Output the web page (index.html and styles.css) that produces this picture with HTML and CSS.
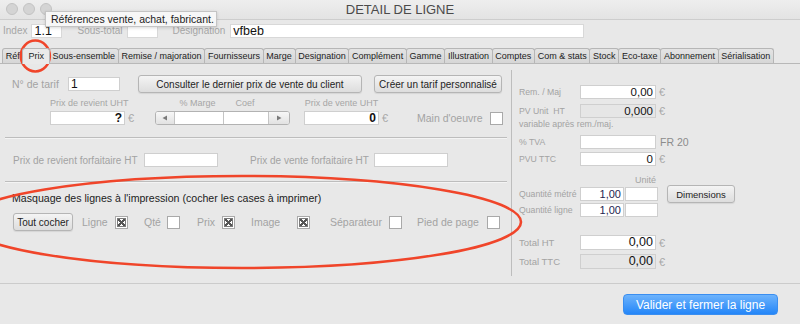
FILE: index.html
```html
<!DOCTYPE html>
<html lang="fr">
<head>
  <meta charset="UTF-8">
  <meta name="viewport" content="width=device-width, initial-scale=1.0">
  <title>DETAIL DE LIGNE</title>
  <link rel="stylesheet" href="styles.css">
</head>
<body>
  <div class="window">
    <div class="titlebar">
      <div class="lights"><span></span><span></span><span></span></div>
      <div class="title">DETAIL DE LIGNE</div>
      <div></div>
    </div>

    <div class="head-row">
      <span class="lbl-top">Index</span>
      <span class="field w-index">1.1</span>
      <span class="lbl-top gap">Sous-total</span>
      <span class="field w-sub"></span>
      <span class="lbl-top gap">Désignation</span>
      <span class="field w-desig">vfbeb</span>
    </div>

    <div class="tabs">
      <span class="tab">Réf</span>
      <span class="tab active">Prix</span>
      <span class="tab">Sous-ensemble</span>
      <span class="tab">Remise / majoration</span>
      <span class="tab">Fournisseurs</span>
      <span class="tab">Marge</span>
      <span class="tab">Designation</span>
      <span class="tab">Complément</span>
      <span class="tab">Gamme</span>
      <span class="tab">Illustration</span>
      <span class="tab">Comptes</span>
      <span class="tab">Com &amp; stats</span>
      <span class="tab">Stock</span>
      <span class="tab">Eco-taxe</span>
      <span class="tab">Abonnement</span>
      <span class="tab">Sérialisation</span>
    </div>

    <div class="content">
      <!-- partie gauche : tarif -->
      <div class="left">
        <div class="row tarif-row">
          <span class="lbl w-tarif-lbl">N° de tarif</span>
          <span class="field w-tarif">1</span>
          <button class="btn btn-consult">Consulter le dernier prix de vente du client</button>
          <button class="btn btn-create">Créer un tarif personnalisé</button>
        </div>

        <div class="row prices-row">
          <div class="group g-revient">
            <span class="cap w-price">Prix de revient UHT</span>
            <div class="ctl"><span class="field num w-price"><b>?</b></span><span class="euro">€</span></div>
          </div>
          <div class="group g-stepper">
            <div class="caps">
              <span class="cap w-arrow-l"></span>
              <span class="cap w-marge">% Marge</span>
              <span class="cap w-coef">Coef</span>
            </div>
            <div class="stepper">
              <span class="arrow w-arrow-l"><svg width="6" height="6" viewBox="0 0 6 6"><path d="M5 0.5L0.5 3L5 5.5Z" fill="#7a7a7a"/></svg></span>
              <span class="cell w-marge"></span>
              <span class="cell w-coef"></span>
              <span class="arrow w-arrow-r"><svg width="6" height="6" viewBox="0 0 6 6"><path d="M1 0.5L5.5 3L1 5.5Z" fill="#7a7a7a"/></svg></span>
            </div>
          </div>
          <div class="group g-vente">
            <span class="cap w-price">Prix de vente UHT</span>
            <div class="ctl"><span class="field num w-price"><b>0</b></span><span class="euro">€</span></div>
          </div>
          <div class="mo">
            <span class="lbl">Main d'oeuvre</span>
            <span class="check"></span>
          </div>
        </div>

        <div class="divider"></div>

        <div class="row forfait-row">
          <span class="lbl-sm w-forf1">Prix de revient forfaitaire HT</span>
          <span class="field w-forf"></span>
          <span class="lbl-sm w-forf2">Prix de vente forfaitaire HT</span>
          <span class="field w-forf"></span>
        </div>

        <div class="divider second"></div>

        <div class="mask-title">Masquage des lignes à l'impression (cocher les cases à imprimer)</div>

        <div class="row mask-row">
          <button class="btn btn-all">Tout cocher</button>
          <span class="opt o-ligne"><span class="lbl">Ligne</span><span class="check on"></span></span>
          <span class="opt o-qte"><span class="lbl">Qté</span><span class="check"></span></span>
          <span class="opt o-prix"><span class="lbl">Prix</span><span class="check on"></span></span>
          <span class="opt o-image"><span class="lbl">Image</span><span class="check on"></span></span>
          <span class="opt o-sep"><span class="lbl">Séparateur</span><span class="check"></span></span>
          <span class="opt o-pied"><span class="lbl">Pied de page</span><span class="check"></span></span>
        </div>
      </div>

      <!-- partie droite : totaux -->
      <div class="right">
        <div class="r-row r-first">
          <span class="r-lbl">Rem. / Maj</span>
          <span class="field num w-r">0,00</span><span class="euro">€</span>
        </div>
        <div class="r-row r-pv">
          <span class="r-lbl">PV Unit&nbsp; HT</span>
          <span class="field num w-r ro">0,000</span><span class="euro">€</span>
        </div>
        <div class="note">variable après rem./maj.</div>
        <div class="r-row r-tva">
          <span class="r-lbl">% TVA</span>
          <span class="field num w-r"></span><span class="tva-code">FR 20</span>
        </div>
        <div class="r-row r-ttc">
          <span class="r-lbl">PVU TTC</span>
          <span class="field num w-r">0</span><span class="euro">€</span>
        </div>
        <div class="unit-cap">Unité</div>
        <div class="r-row r-qm">
          <span class="r-lbl">Quantité métré</span>
          <span class="field num w-qty qty">1,00</span>
          <span class="field w-unit"></span>
          <button class="btn btn-dim">Dimensions</button>
        </div>
        <div class="r-row r-ql">
          <span class="r-lbl">Quantité ligne</span>
          <span class="field num w-qty qty">1,00</span>
          <span class="field w-unit"></span>
        </div>
        <div class="r-row r-tht">
          <span class="r-lbl total">Total HT</span>
          <span class="field num w-r big">0,00</span><span class="euro">€</span>
        </div>
        <div class="r-row r-tttc">
          <span class="r-lbl total">Total TTC</span>
          <span class="field num w-r big ro">0,00</span><span class="euro">€</span>
        </div>
      </div>
    </div>

    <div class="footer">
      <button class="btn-primary">Valider et fermer la ligne</button>
    </div>

    <div class="tooltip">Références vente, achat, fabricant.</div>

    <!-- annotations rouges -->
    <svg class="marks" width="800" height="326" viewBox="0 0 800 326">
      <ellipse cx="35.3" cy="56" rx="14.5" ry="15.5" fill="none" stroke="#f0452a" stroke-width="2.6"/>
      <ellipse cx="242" cy="222" rx="279" ry="46" fill="none" stroke="#f0452a" stroke-width="2.6"/>
    </svg>
  </div>
</body>
</html>
```

FILE: styles.css
```css
/* fenêtre détail de ligne */
* {
  box-sizing: border-box;
}
body {
  margin: 0;
  background-color: #ffffff;
  font-family: "Liberation Sans", Arial, sans-serif;
}
.window {
  position: relative;
  width: 800px;
  height: 324px;
  background-color: #e8e8e8;
  display: flex;
  flex-direction: column;
}

/* barre de titre */
.titlebar {
  flex: none;
  height: 20px;
  display: grid;
  grid-template-columns: 1fr auto 1fr;
  align-items: center;
  background: linear-gradient(#eeeeee, #e3e3e3);
  border-bottom: 1px solid #cdcdcd;
}
.lights {
  display: flex;
  gap: 5px;
  padding-left: 6px;
  margin-top: -1px;
}
.lights span {
  width: 12px;
  height: 12px;
  border-radius: 50%;
  background-color: #d4d4d4;
  border: 1px solid #c3c3c3;
}
.title {
  font-size: 13px;
  color: #4a4a4a;
}

/* infobulle */
.tooltip {
  position: absolute;
  left: 45px;
  top: 11px;
  width: 172px;
  height: 16px;
  padding-left: 5px;
  font-size: 10.5px;
  line-height: 14px;
  color: #222222;
  background-color: #f7f7f7;
  border: 1px solid #c4c4c4;
  box-shadow: 0 1px 3px rgba(0, 0, 0, 0.15);
}

/* champs */
.field {
  display: inline-block;
  height: 14px;
  background-color: #ffffff;
  border: 1px solid #cfcfcf;
  font-size: 12px;
  line-height: 12px;
  padding: 0 2px;
  color: #111111;
  flex: none;
}
.field.num {
  text-align: right;
  font-size: 11.5px;
}
.field.ro {
  background-color: #e6e6e6;
}
.euro {
  margin-left: 3px;
  font-size: 11px;
  color: #a8a8a8;
}

/* ligne index / désignation */
.head-row {
  flex: none;
  height: 28px;
  display: flex;
  align-items: flex-start;
  padding: 4px 0 0 3px;
}
.lbl-top {
  font-size: 10px;
  line-height: 14px;
  color: #a6a6a6;
  margin-right: 4px;
}
.lbl-top.gap {
  margin-left: 15px;
}
.head-row .field {
  font-size: 12.5px;
  border-color: #d8d8d8;
}
.w-index { width: 31px; }
.w-sub { width: 31px; }
.w-desig { width: 354px; margin-left: 1px; }

/* onglets */
.tabs {
  flex: none;
  display: flex;
  height: 16px;
  padding-left: 2px;
  border-bottom: 1px solid #b8b8b8;
}
.tab {
  height: 15px;
  padding: 0 2.7px;
  margin-right: -1px;
  font-size: 9px;
  line-height: 14px;
  color: #222222;
  white-space: nowrap;
  background: linear-gradient(#e4e4e4, #d6d6d6);
  border: 1px solid #b6b6b6;
  border-bottom: none;
  border-radius: 3px 3px 0 0;
}
.tab.active {
  position: relative;
  height: 16px;
  padding: 0 5px;
  background: #eaeaea;
  z-index: 1;
}

/* contenu */
.content {
  flex: none;
  height: 219px;
  display: flex;
}
.left {
  width: 512px;
  margin: 6px 0 7px;
  border-right: 1px solid #bdbdbd;
}
.row {
  display: flex;
  align-items: center;
}
.lbl {
  font-size: 10.5px;
  color: #a3a3a3;
  white-space: nowrap;
}
.lbl-sm {
  font-size: 10px;
  color: #a3a3a3;
  white-space: nowrap;
}

.tarif-row {
  height: 18px;
  margin-top: 5px;
  padding-left: 12px;
}
.w-tarif-lbl { width: 56px; }
.w-tarif { width: 52px; }
.btn {
  height: 18px;
  padding: 0;
  font-family: "Liberation Sans", Arial, sans-serif;
  font-size: 10px;
  color: #1e1e1e;
  background: linear-gradient(#f4f4f4, #dddddd);
  border: 1px solid #b5b5b5;
  border-radius: 3px;
  box-shadow: 0 1px 1px rgba(0, 0, 0, 0.08);
  white-space: nowrap;
}
.btn-consult {
  width: 224px;
  margin-left: 18px;
}
.btn-create {
  width: 128px;
  margin-left: 12px;
}

.prices-row {
  align-items: flex-end;
  margin-top: 5px;
}
.group {
  display: flex;
  flex-direction: column;
}
.cap {
  height: 10px;
  margin-bottom: 3px;
  font-size: 9px;
  line-height: 10px;
  color: #a6a6a6;
  text-align: center;
  white-space: nowrap;
}
.ctl {
  display: flex;
  align-items: center;
}
.w-price { width: 75px; }
.g-revient {
  margin-left: 50px;
  width: 105px;
}
.g-revient .field b,
.g-vente .field b {
  font-size: 12px;
}
.caps {
  display: flex;
}
.stepper {
  display: flex;
  height: 14px;
  border: 1px solid #b2b2b2;
  border-radius: 3px;
  background: #ffffff;
  overflow: hidden;
}
.arrow {
  display: flex;
  align-items: center;
  justify-content: center;
  background: linear-gradient(#f7f7f7, #e2e2e2);
}
.w-arrow-l { width: 18px; }
.w-arrow-r { width: 20px; }
.w-marge { width: 49px; }
.w-coef { width: 46px; }
.cell {
  border-left: 1px solid #c4c4c4;
}
.cell.w-coef {
  border-right: 1px solid #c4c4c4;
}
.g-vente {
  margin-left: 14px;
  width: 113px;
}
.mo {
  display: flex;
  align-items: center;
  height: 14px;
}
.mo .check {
  margin-left: 7px;
}
.check {
  display: inline-block;
  flex: none;
  width: 13px;
  height: 13px;
  background-color: #ffffff;
  border: 1px solid #a9a9a9;
}
.check.on {
  background:
    linear-gradient(45deg, transparent 45%, #555555 45%, #555555 56%, transparent 56%),
    linear-gradient(-45deg, transparent 45%, #555555 45%, #555555 56%, transparent 56%),
    #ffffff;
  box-shadow: inset 0 0 0 1px #ffffff, inset 0 0 0 2px #7a7a7a;
}

.divider {
  margin: 12px 4px 0 5px;
  border-top: 1px solid #bdbdbd;
  border-bottom: 1px solid #f4f4f4;
}
.divider.second {
  margin-top: 14px;
}
.forfait-row {
  margin-top: 14px;
  padding-left: 13px;
}
.w-forf1 { width: 131px; }
.w-forf { width: 74px; }
.w-forf2 {
  width: 124px;
  margin-left: 32px;
}

.mask-title {
  margin: 9px 0 0 12px;
  font-size: 10.6px;
  line-height: 12px;
  color: #1c1c1c;
}
.mask-row {
  height: 18px;
  margin-top: 9px;
  padding-left: 13px;
}
.btn-all {
  width: 60px;
}
.opt {
  display: flex;
  align-items: center;
  justify-content: space-between;
}
.o-ligne { width: 46px; margin-left: 9px; }
.o-qte { width: 36px; margin-left: 16px; }
.o-prix { width: 38px; margin-left: 17px; }
.o-image { width: 59px; margin-left: 16px; }
.o-sep { width: 72px; margin-left: 20px; }
.o-pied { width: 83px; margin-left: 15px; }

/* partie droite */
.right {
  flex: 1;
  padding: 6px 0 0 7px;
}
.r-row {
  display: flex;
  align-items: center;
  height: 14px;
}
.r-lbl {
  width: 61px;
  flex: none;
  font-size: 8.7px;
  color: #a3a3a3;
  white-space: nowrap;
}
.r-lbl.total {
  font-size: 9.5px;
}
.w-r { width: 76px; }
.r-first { margin-top: 15px; }
.r-pv { margin-top: 5px; }
.note {
  margin-top: 2px;
  height: 8px;
  font-size: 8.8px;
  line-height: 8px;
  color: #a3a3a3;
}
.r-tva { margin-top: 7px; }
.tva-code {
  margin-left: 4px;
  font-size: 10.5px;
  color: #8c8c8c;
}
.r-ttc { margin-top: 3px; }
.unit-cap {
  margin: 10px 0 0 116px;
  height: 8px;
  font-size: 9px;
  line-height: 8px;
  color: #a3a3a3;
}
.r-qm { margin-top: 3px; }
.r-ql { margin-top: 2px; }
.w-qty { width: 44px; }
.w-unit {
  width: 33px;
  margin-left: 1px;
}
.field.qty {
  font-size: 11px;
  color: #1d2550;
}
.btn-dim {
  width: 68px;
  margin-left: 9px;
  font-size: 9.5px;
}
.r-tht {
  margin-top: 18px;
  height: 15px;
}
.r-tttc {
  margin-top: 4px;
  height: 15px;
}
.field.big {
  height: 15px;
  font-size: 12.5px;
  line-height: 13px;
}

/* pied */
.footer {
  flex: 1;
  display: flex;
  justify-content: flex-end;
  align-items: flex-start;
  padding: 10px 22px 0 0;
  border-top: 1px solid #cbcbcb;
}
.btn-primary {
  width: 155px;
  height: 21px;
  padding: 0;
  font-family: "Liberation Sans", Arial, sans-serif;
  font-size: 12px;
  color: #ffffff;
  background: linear-gradient(#6db3fc, #2486f8);
  border: 1px solid #3a8ef0;
  border-radius: 4px;
}

/* annotations */
.marks {
  position: absolute;
  left: 0;
  top: 0;
  pointer-events: none;
}
```
